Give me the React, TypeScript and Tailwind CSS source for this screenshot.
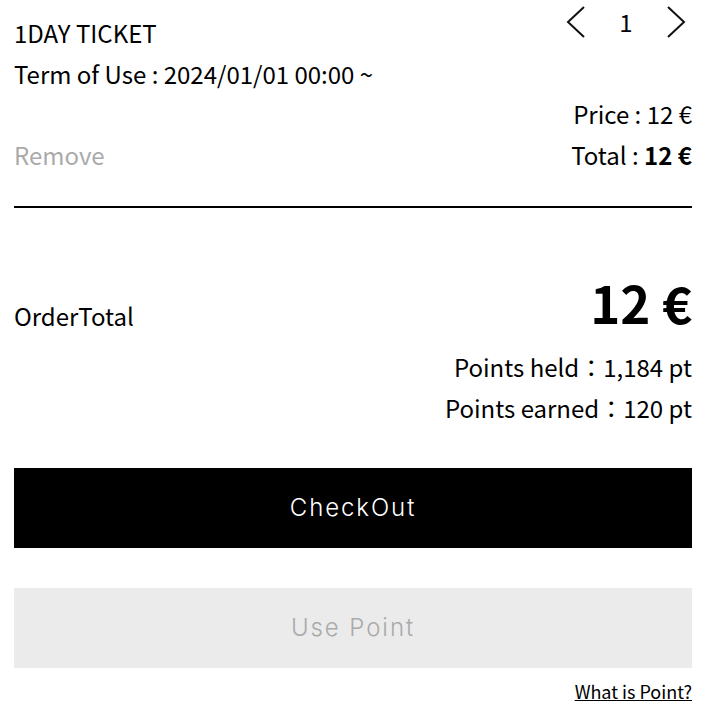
import React from "react";

const jp = { fontFamily: '"Noto Sans CJK JP", "Noto Sans", sans-serif' };

function Chevron({ dir }: { dir: "left" | "right" }) {
  return (
    <svg width="20" height="32" viewBox="0 0 20 32" fill="none" stroke="#111" strokeWidth="2">
      {dir === "left" ? <polyline points="18,1 2,16 18,31" /> : <polyline points="2,1 18,16 2,31" />}
    </svg>
  );
}

export default function App() {
  return (
    <div className="w-[718px] h-[718px] bg-white text-black overflow-hidden" style={jp}>
      <div className="ml-[14px] w-[678px] pt-[13px]">
        <div className="text-[24px] leading-[40.7px]">
          <div className="flex items-center justify-between">
            <span>1DAY TICKET</span>
            <div className="flex items-center -mt-[23px] -mr-[4px]">
              <button className="w-[40px] h-[40px] flex items-center justify-center">
                <Chevron dir="left" />
              </button>
              <span className="w-[60px] text-center">1</span>
              <button className="w-[40px] h-[40px] flex items-center justify-center">
                <Chevron dir="right" />
              </button>
            </div>
          </div>
          <div>Term of Use : 2024/01/01 00:00 ~</div>
          <div className="text-right">Price : 12 €</div>
          <div className="flex justify-between">
            <span className="text-[#aaaaaa]">Remove</span>
            <span>
              Total : <b className="font-bold">12 €</b>
            </span>
          </div>
        </div>
        <div className="mt-[30px] h-[2px] bg-black" />
        <div className="mt-[62px] flex items-end justify-between">
          <span className="text-[24px] leading-[37px]">OrderTotal</span>
          <span className="text-[51px] font-bold leading-[64px]">12 €</span>
        </div>
        <div className="mt-[12px] text-[24px] leading-[41px] text-right">
          <div>Points held：1,184 pt</div>
          <div>Points earned：120 pt</div>
        </div>
        <button
          className="mt-[40px] w-full h-[80px] bg-black text-white text-[24px] font-light tracking-[0.08em]"
          style={{ fontFamily: '"Inter", sans-serif' }}
        >
          CheckOut
        </button>
        <button
          className="mt-[40px] w-full h-[80px] bg-[#ebebeb] text-[#aaaaaa] text-[24px] font-light tracking-[0.08em]"
          style={{ fontFamily: '"Inter", sans-serif' }}
        >
          Use Point
        </button>
        <div className="mt-[10px] text-right leading-[26px]">
          <a className="text-[18px] underline">What is Point?</a>
        </div>
      </div>
    </div>
  );
}
